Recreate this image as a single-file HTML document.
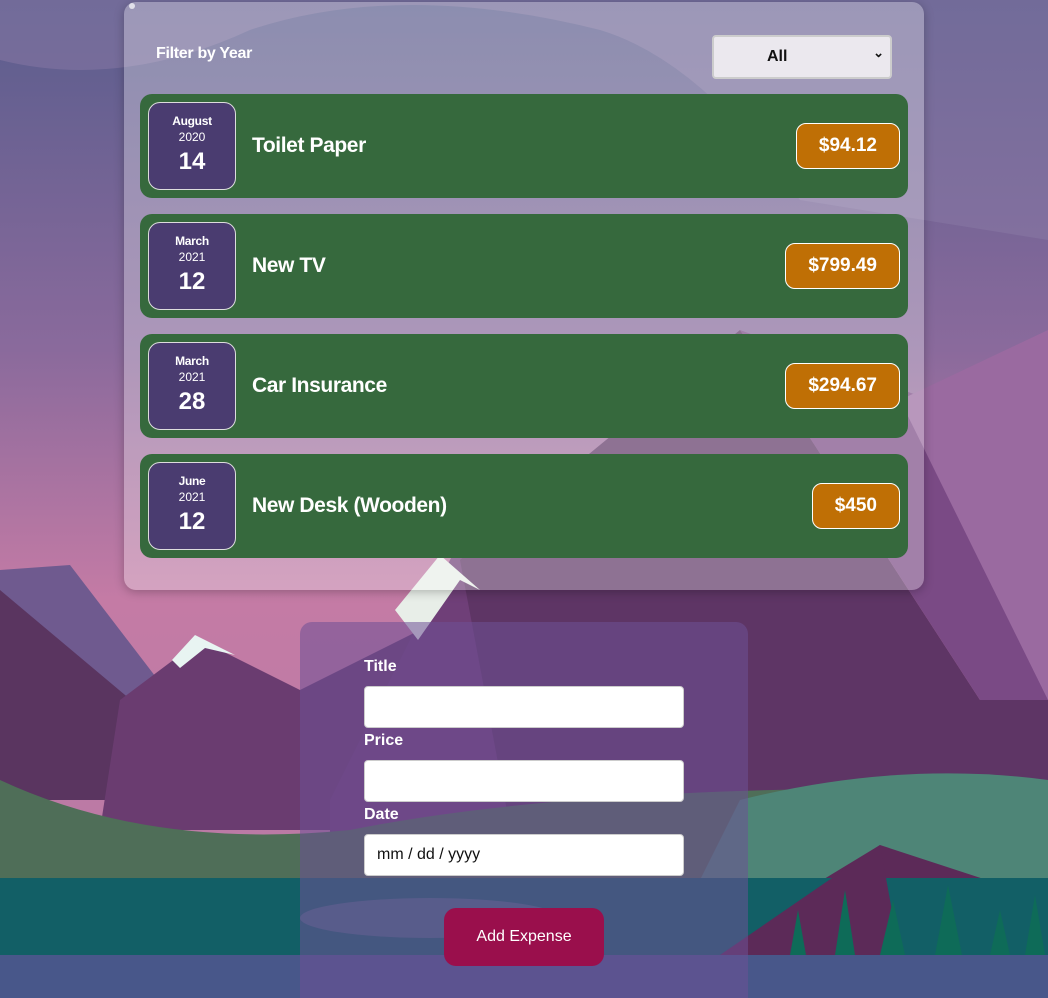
<!DOCTYPE html>
<html><head><meta charset="utf-8"><style>
*{box-sizing:border-box;margin:0;padding:0}
html,body{width:1048px;height:998px;overflow:hidden}
body{position:relative;font-family:"Liberation Sans",sans-serif;background:#6a5a8e}
svg.bg{position:absolute;left:0;top:0}
.card{position:absolute;left:124px;top:2px;width:800px;height:588px;background:rgba(255,255,255,0.3);border-radius:12px;box-shadow:0 2px 10px rgba(0,0,0,0.25)}
.fl{position:absolute;left:32px;top:43px;color:#fff;font-weight:bold;font-size:16px;letter-spacing:-0.3px}
.sel{position:absolute;left:588px;top:33px;width:180px;height:44px;background:#ebe8ee;border:2px solid #ccc;border-radius:4px;font-weight:bold;font-size:16px;color:#111;line-height:40px;padding-left:53px}
.sel:after{content:"⌄";position:absolute;right:6px;top:-4px;font-size:13px}
.item{position:absolute;left:16px;width:768px;height:104px;background:#36693d;border-radius:12px}
.date{position:absolute;left:8px;top:8px;width:88px;height:88px;background:#4a3c70;border:1px solid #ddd;border-radius:12px;color:#fff;text-align:center}
.date .m{font-size:12px;font-weight:bold;margin-top:11px;letter-spacing:-0.3px}
.date .y{font-size:12px;margin-top:2px}
.date .d{font-size:24px;font-weight:bold;margin-top:4px}
.t{position:absolute;left:112px;top:40px;color:#fff;font-weight:bold;font-size:21px;letter-spacing:-0.4px}
.p{position:absolute;right:8px;top:29px;height:46px;background:#bf6f05;border:1px solid #fff;border-radius:10px;color:#fff;font-weight:bold;font-size:19px;line-height:44px;padding:0 22px}
.form{position:absolute;left:300px;top:622px;width:448px;height:376px;background:rgba(110,80,150,0.55);border-radius:12px 12px 0 0}
.lb{position:absolute;left:64px;color:#fff;font-weight:bold;font-size:16px}
.in{position:absolute;left:64px;width:320px;height:42px;background:#fff;border:1px solid #ccc;border-radius:4px;font-size:16px;color:#111;padding-left:12px;line-height:40px}
.btn{position:absolute;left:144px;top:286px;width:160px;height:58px;background:#9a0f4c;border-radius:12px;color:#fff;font-size:16px;text-align:center;line-height:58px}
</style></head><body>
<svg class="bg" width="1048" height="998" viewBox="0 0 1048 998">
<defs><linearGradient id="sky" x1="0" y1="0" x2="0" y2="1"><stop offset="0" stop-color="#5a5d8d"/><stop offset="0.35" stop-color="#8a6a9c"/><stop offset="0.6" stop-color="#c47ba5"/><stop offset="1" stop-color="#b57aa5"/></linearGradient></defs>
<rect width="1048" height="998" fill="url(#sky)"/>
<path d="M0 60 Q120 90 250 30 Q400 -20 600 30 Q700 60 800 200 L1048 240 L1048 0 L0 0Z" fill="#8a7aa5" opacity="0.5"/>
<polygon points="0,570 70,565 250,800 0,800" fill="#6f5a8f"/>
<polygon points="0,590 250,800 0,800" fill="#5a3560"/>
<polygon points="120,700 200,640 300,690 440,620 480,830 100,830" fill="#6a3c70"/>
<polygon points="330,800 460,540 660,900 330,900" fill="#6f3f78"/>
<polygon points="460,560 740,330 980,700 1048,600 1048,880 520,880" fill="#5e3565"/>
<polygon points="740,330 930,400 1048,520 1048,700 980,700" fill="#7a4a85"/>
<polygon points="900,400 1048,330 1048,700" fill="#9a6aa0"/>
<path d="M0 780 Q150 850 350 830 Q600 780 1048 790 L1048 880 L0 880Z" fill="#4f6e58"/>
<path d="M740 800 Q900 760 1048 780 L1048 880 L700 880Z" fill="#4e8577"/>
<polygon points="740,930 880,845 1048,900 1048,955 740,955" fill="#5c2a58"/>
<rect x="0" y="878" width="1048" height="77" fill="#125f66"/>
<ellipse cx="430" cy="918" rx="130" ry="20" fill="#3e6a7e"/>
<polygon points="720,955 880,845 900,955" fill="#5c2a58"/>
<g fill="#0e6b58"><polygon points="835,955 845,890 855,955"/><polygon points="880,955 893,900 905,955"/><polygon points="935,955 948,885 962,955"/><polygon points="990,955 1000,910 1010,955"/><polygon points="1025,955 1035,895 1045,955"/><polygon points="790,955 798,910 806,955"/></g>
<rect x="0" y="955" width="1048" height="43" fill="#48578a"/>
<polygon points="395,610 440,555 480,590 460,580 418,640" fill="#e8eee8"/>
<polygon points="172,660 195,635 235,655 205,648 180,668" fill="#e8f4f2"/>
<circle cx="132" cy="6" r="3" fill="#fff" opacity="0.7"/>
</svg>
<div class="card">
<div class="fl">Filter by Year</div>
<div class="sel">All</div>
<div class="item" style="top:92px"><div class="date"><div class="m">August</div><div class="y">2020</div><div class="d">14</div></div><div class="t">Toilet Paper</div><div class="p">$94.12</div></div>
<div class="item" style="top:212px"><div class="date"><div class="m">March</div><div class="y">2021</div><div class="d">12</div></div><div class="t">New TV</div><div class="p">$799.49</div></div>
<div class="item" style="top:332px"><div class="date"><div class="m">March</div><div class="y">2021</div><div class="d">28</div></div><div class="t">Car Insurance</div><div class="p">$294.67</div></div>
<div class="item" style="top:452px"><div class="date"><div class="m">June</div><div class="y">2021</div><div class="d">12</div></div><div class="t">New Desk (Wooden)</div><div class="p">$450</div></div>
</div>
<div class="form">
<div class="lb" style="top:36px">Title</div>
<div class="in" style="top:64px"></div>
<div class="lb" style="top:110px">Price</div>
<div class="in" style="top:138px"></div>
<div class="lb" style="top:184px">Date</div>
<div class="in" style="top:212px">mm / dd / yyyy</div>
<div class="btn">Add Expense</div>
</div>
</body></html>
